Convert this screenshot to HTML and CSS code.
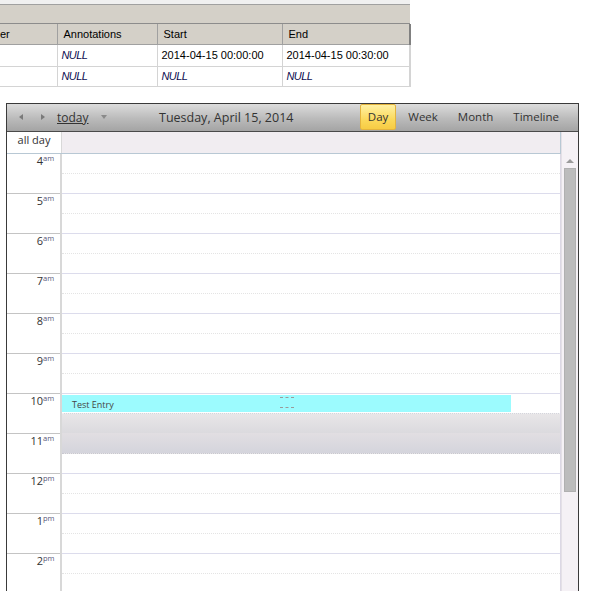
FILE: index.html
```html
<!doctype html>
<html lang="en">
  <head>
    <meta charset="UTF-8" />
    <title>Calendar - Day view</title>
    <link rel="stylesheet" href="styles.css">
  </head>
  <body>
    <div class="grid-panel">
      <div class="grid-caption"></div>
      <table class="grid">
        <thead>
          <tr>
            <th class="col-a">er</th>
            <th class="col-b">Annotations</th>
            <th class="col-c">Start</th>
            <th class="col-d">End</th>
          </tr>
        </thead>
        <tbody>
          <tr class="row-tall">
            <td></td>
            <td class="null">NULL</td>
            <td>2014-04-15 00:00:00</td>
            <td>2014-04-15 00:30:00</td>
          </tr>
          <tr>
            <td></td>
            <td class="null">NULL</td>
            <td class="null">NULL</td>
            <td class="null">NULL</td>
          </tr>
        </tbody>
      </table>
    </div>

    <div class="cal">
      <div class="cal-toolbar">
        <div class="cal-nav">
          <span class="tri tri-left"></span>
          <span class="tri tri-right"></span>
          <a href="#" class="today">today</a>
          <span class="tri tri-down"></span>
        </div>
        <div class="cal-title">Tuesday, April 15, 2014</div>
        <div class="cal-views">
          <span class="view active">Day</span>
          <span class="view">Week</span>
          <span class="view">Month</span>
          <span class="view">Timeline</span>
        </div>
      </div>

      <div class="cal-body">
        <div class="cal-main">
          <div class="allday-row">
            <div class="allday-label">all day</div>
            <div class="allday-cell"></div>
          </div>

          <div class="hours">
            <div class="time-col">
              <div class="hour-label">4<sup>am</sup></div>
              <div class="hour-label">5<sup>am</sup></div>
              <div class="hour-label">6<sup>am</sup></div>
              <div class="hour-label">7<sup>am</sup></div>
              <div class="hour-label">8<sup>am</sup></div>
              <div class="hour-label">9<sup>am</sup></div>
              <div class="hour-label">10<sup>am</sup></div>
              <div class="hour-label">11<sup>am</sup></div>
              <div class="hour-label">12<sup>pm</sup></div>
              <div class="hour-label">1<sup>pm</sup></div>
              <div class="hour-label">2<sup>pm</sup></div>
            </div>

            <div class="day-col">
              <div class="slot"></div><div class="slot"></div>
              <div class="slot"></div><div class="slot"></div>
              <div class="slot"></div><div class="slot"></div>
              <div class="slot"></div><div class="slot"></div>
              <div class="slot"></div><div class="slot"></div>
              <div class="slot"></div><div class="slot"></div>
              <div class="slot"></div><div class="slot"></div>
              <div class="slot"></div><div class="slot"></div>
              <div class="slot"></div><div class="slot"></div>
              <div class="slot"></div><div class="slot"></div>
              <div class="slot"></div><div class="slot"></div>

              <!-- events sit on top of the slot grid -->
              <div class="event event-test">
                <span class="event-title">Test Entry</span>
                <span class="grip grip-top"></span>
                <span class="grip grip-bottom"></span>
              </div>
              <div class="event event-busy"></div>
            </div>
          </div>
        </div>

        <div class="scrollbar">
          <span class="scroll-up"></span>
          <div class="scroll-thumb"></div>
        </div>
      </div>
    </div>
  </body>
</html>
```

FILE: styles.css
```css
* {
  margin: 0;
  padding: 0;
  box-sizing: border-box;
}

body {
  font-family: 'Open Sans', 'Noto Sans', sans-serif;
  background: #fff;
  color: #333;
  height: 591px;
  overflow: hidden;
}

/* Result grid */
.grid-panel {
  width: 410px;
  padding-top: 4px;
  background: #f0f0f0;
}

.grid-caption {
  height: 20px;
  background: #d4d0c8;
  border-top: 1px solid #a0a0a0;
  border-bottom: 1px solid #8c8c8c;
}

.grid {
  width: 410px;
  border-collapse: collapse;
  table-layout: fixed;
  background: #fff;
  font-family: 'Liberation Sans', Arial, sans-serif;
  font-size: 11px;
  color: #000;
}

.grid th {
  height: 20px;
  padding: 0 6px;
  background: #d4d0c8;
  font-weight: normal;
  text-align: left;
  border-left: 1px solid #fff;
  border-right: 1px solid #a0a0a0;
  border-bottom: 1px solid #a0a0a0;
}

.grid th.col-a {
  padding-left: 0;
  border-left: 0;
}

.grid th.col-d {
  border-right: 2px solid #808080;
}

.col-a { width: 57px; }
.col-b { width: 100px; }
.col-c { width: 125px; }
.col-d { width: 128px; }

.grid td {
  height: 20px;
  padding: 0 4px;
  border-right: 1px solid #d4d4d4;
  border-bottom: 1px solid #d4d4d4;
  white-space: nowrap;
}

.grid td:last-child {
  border-right: 2px solid #d4d4d4;
}

.grid .row-tall td {
  height: 22px;
}

.grid td.null {
  font-style: italic;
  color: #0c0c50;
  letter-spacing: -0.6px;
}

/* Calendar */
.cal {
  width: 573px;
  margin: 16px 0 0 6px;
  border: 1px solid #3a3a3a;
  border-bottom: 0;
  background: #fff;
}

.cal-toolbar {
  display: flex;
  align-items: center;
  height: 28px;
  padding: 0 0 0 12px;
  background: linear-gradient(#dcdcdc 0%, #bababa 55%, #a4a4a4 100%);
  border-bottom: 1px solid #4a4a4a;
}

.cal-nav {
  display: flex;
  align-items: center;
  width: 140px;
}

.tri {
  width: 0;
  height: 0;
  border-style: solid;
  border-color: transparent;
}

.tri-left {
  border-width: 3px 4px 3px 0;
  border-right-color: #7a7a7a;
  margin-right: 18px;
}

.tri-right {
  border-width: 3px 0 3px 4px;
  border-left-color: #7a7a7a;
  margin-right: 12px;
}

.tri-down {
  border-width: 4px 3.5px 0 3.5px;
  border-top-color: #8a8a8a;
  margin-left: 12px;
}

.today {
  color: #333;
  font-size: 12px;
  text-decoration: underline;
}

.cal-title {
  font-size: 12.5px;
  color: #333;
}

.cal-views {
  display: flex;
  align-items: center;
  margin-left: auto;
  margin-right: 18px;
  gap: 18px;
}

.view {
  padding: 3px 0 4px;
  font-size: 11.5px;
  color: #333;
  border: 1px solid transparent;
  border-radius: 2px;
}

.view.active {
  padding: 4px 7px 5px;
  margin-right: -7px;
  background: linear-gradient(#fff1a4, #fbd95c 60%, #f7cc44);
  border-color: #e4b43e;
}

.cal-body {
  display: flex;
  height: 470px;
}

.cal-main {
  width: 554px;
}

.allday-row {
  display: flex;
  height: 22px;
  border-bottom: 1px solid #b8c8d4;
}

.allday-label {
  width: 55px;
  font-size: 11px;
  text-align: center;
  line-height: 15px;
  border-right: 1px solid #d8d8d8;
}

.allday-cell {
  flex: 1;
  background: #f1edf1;
  border-right: 1px solid #b8c8d4;
}

.hours {
  display: flex;
}

.time-col {
  width: 55px;
  border-right: 2px solid #d8d8d8;
}

.hour-label {
  height: 40px;
  padding: 0 5px 0 0;
  text-align: right;
  font-size: 11px;
  line-height: 13px;
  color: #333;
  border-bottom: 1px solid #c4c4c4;
}

.hour-label sup {
  display: inline-block;
  width: 12px;
  text-align: left;
  font-size: 7.5px;
  line-height: 8px;
  vertical-align: 4px;
  color: #58587a;
}

.day-col {
  position: relative;
  flex: 1;
  border-right: 1px solid #dcd8e4;
}

.slot {
  height: 20px;
  border-bottom: 1px dotted #e4e4e4;
}

.slot:nth-child(2n) {
  border-bottom: 1px solid #dcdcec;
}

.event {
  position: absolute;
  left: 0;
}

.event-test {
  top: 241px;
  width: 449px;
  height: 17px;
  background: #9cfbfe;
}

.event-title {
  position: absolute;
  left: 10px;
  top: 3px;
  font-size: 9px;
  color: #444;
}

.grip {
  position: absolute;
  left: 218px;
  width: 14px;
  border-top: 1px dashed #9a9a9a;
}

.grip-top { top: 2px; }
.grip-bottom { top: 12px; }

.event-busy {
  top: 259px;
  right: 0;
  height: 41px;
  background: linear-gradient(#e8e6e8, #dbdade 48%, #e1dee2 50%, #d4d4dc);
  border-top: 1px dotted #f0f0f0;
  border-bottom: 1px dotted #c8c8d0;
}

.scrollbar {
  position: relative;
  flex: 1;
  background: #f5f1f5;
  border-left: 1px solid #e4e0e6;
}

.scroll-up {
  position: absolute;
  top: 27px;
  left: 4px;
  width: 0;
  height: 0;
  border-style: solid;
  border-width: 0 4px 4px 4px;
  border-color: transparent transparent #9a9a9a transparent;
}

.scroll-thumb {
  margin: 36px 0 0 2px;
  width: 12px;
  height: 324px;
  background: #bcbcbc;
  border: 1px solid #b0b0b0;
}
```
